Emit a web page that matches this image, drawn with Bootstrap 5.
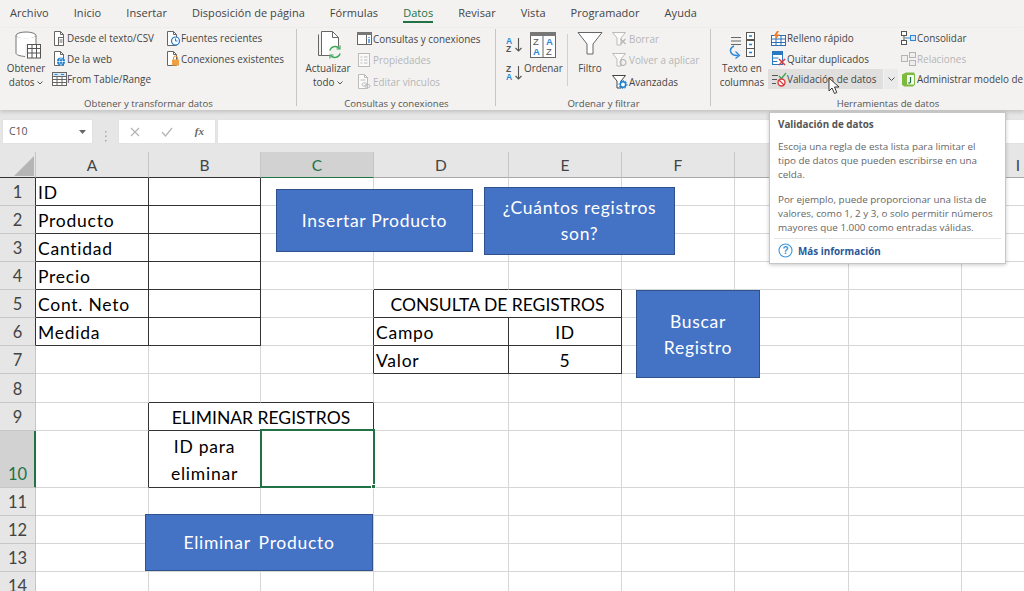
<!DOCTYPE html>
<html lang="es">
<head>
<meta charset="utf-8">
<title>Excel - Validación de datos</title>
<link href="https://cdn.jsdelivr.net/npm/bootstrap@5.3.0/dist/css/bootstrap.min.css" rel="stylesheet">
<style>
html,body{margin:0;height:591px;overflow:hidden;background:#fff}
.xl-app{width:1024px;height:591px;overflow:hidden;position:relative;font-family:"Open Sans","Liberation Sans",sans-serif;color:#444}
.xl-tabs{height:28px;background:#f3f2f1;padding-left:10px;gap:25px;font-size:11px;letter-spacing:.05px;line-height:26px;color:#444;white-space:nowrap}
.xl-tab{position:relative}
.xl-tab.on{color:#217346}
.xl-tab.on::after{content:"";position:absolute;left:0;right:0;top:21px;height:2px;background:#217346}
.xl-ribbon{height:82px;background:#f3f2f1;font-size:9.9px;white-space:nowrap;position:relative;z-index:2;box-shadow:0 2px 4px rgba(0,0,0,.16)}
.xl-grp{position:relative;height:82px;flex:none}
.xl-grp::after{content:"";position:absolute;right:0;top:1px;width:1px;height:77px;background:#c8c6c4}
.xl-g1{width:297px}.xl-g2{width:199px}.xl-g3{width:215px}.xl-g4{width:354px}
.xl-g4::after{display:none}
.xl-body{height:68px}
.xl-lbl{height:14px;line-height:15px;text-align:center;color:#555;font-size:9.6px}
.xl-big{flex:none;line-height:14px;text-align:center}
.xl-big svg{display:block;margin:3px auto 2px;height:28px}
.xl-big svg.ob{margin-left:10px}
.xl-big svg.ac{margin-left:12px}
.xl-big svg.inl{display:inline;margin:0;height:4px}
.xl-col{flex:none}
.xl-row{height:20.5px;line-height:20.5px}
.xl-row2{height:21.3px;line-height:22px}
.xl-slot{width:16px;flex:none;display:flex;align-items:center;justify-content:center}
.off{color:#b6b6b6}
.p1{margin-left:1px}.w50{width:50px}.w46{width:46px}.w38{width:38px}.w34{width:34px}
.c1a{width:114px}.c1b{width:120px}.c2a{width:140px;margin-left:2px}.c4a{width:116px;margin-left:3px}
.pl6{margin-left:6px}.pl4{margin-left:4px}.pl8{margin-left:8px}.pl9{margin-left:9px}
.s18{width:18px}.s17{width:17px;margin-left:2px}
.xl-sort{width:19px}
.xl-sort svg{display:block}
.so1{margin-top:9px}.so2{margin-top:12px}
.xl-vsep{width:1px;height:52px;margin:6px 5px 0 5px;background:#d2d0ce}
.xl-hot{background:#e1dfdd;height:20px;width:115px}
.xl-dcol{width:15px;padding-top:41px}
.xl-drop{width:14px;height:20px;background:#eaeaea}
.xl-fbar{height:42px;background:#e6e6e6;padding:10px 0 0 3px;gap:0}
.xl-box{background:#fff;height:23px;box-shadow:0 0 1px #cfcfcf}
.xl-name{width:89px;font-size:10.5px;color:#555;padding:0 6px}
.xl-grip{width:27px}
.xl-fx{width:96px;color:#a8a8a8;font-size:13px;padding:0 11px}
.xl-fx i{font-family:"Liberation Serif",serif;font-weight:700;color:#666;font-size:11px}
.xl-input{flex:1;margin-left:3px}
.xl-sheet{position:relative;height:439px;overflow:hidden;background:#fff}
.xl-sheet .xl-tb{width:1075px;table-layout:fixed;border-collapse:separate;border-spacing:0;margin:0;font-family:Lato,"Liberation Sans",sans-serif;font-size:17.5px;letter-spacing:.75px;color:#000}
.xl-sheet .xl-tb>*>*>*{padding:2px 2px 0;border-width:0 1px 1px 0;border-style:solid;border-color:#d6d6d6;height:28px;line-height:25px;background:#fff;box-shadow:none;vertical-align:bottom;overflow:visible;white-space:nowrap;color:#000}
.xl-sheet .xl-tb>*>*>.rn{background:#e6e6e6;border-color:#c6c6c6;text-align:center;color:#444;font-weight:400;padding:2px 0 0;font-size:16.5px;letter-spacing:0}
.xl-sheet .xl-tb>thead>tr>th{height:26px;background:#e6e6e6;border-color:#c6c6c6 #c6c6c6 #a8a8a8 #c6c6c6;text-align:center;color:#444;font-weight:400;font-size:15.5px;line-height:24px;padding:1px 0 0;vertical-align:middle;letter-spacing:0}
.xl-sheet .xl-tb>*>tr.r29>*{height:29px}
.xl-sheet .xl-tb>*>tr.r57>*{height:57px}
.xl-sheet .xl-tb>tbody>tr>.br{border-right-color:#333}
.xl-sheet .xl-tb>tbody>tr>.bb,.xl-sheet .xl-tb>thead>tr>.bb{border-bottom-color:#333}
.xl-sheet .xl-tb>tbody>tr>.ctr{text-align:center}
.xl-sheet .xl-tb>tbody>tr>.caps{letter-spacing:0}
.xl-sheet .xl-tb>tbody>tr>.wrap{white-space:normal;line-height:27px;padding:2px 20px 0;text-align:center}
.xl-sheet .xl-tb>thead>tr>.selc{background:#d2d2d2;border-bottom-color:#217346;color:#217346}
.xl-sheet .xl-tb>tbody>tr>.selr{background:#d2d2d2;border-right-color:#217346;color:#217346;box-shadow:inset -1px 0 0 #217346}
.xl-sel{position:absolute;left:260px;top:277px;width:115px;height:59px;border:2px solid #217346}
.xl-sel::after{content:"";position:absolute;right:-3px;bottom:-3px;width:5px;height:5px;background:#217346;border:1px solid #fff}
.xl-shape{position:absolute;background:#4472c4;border:1px solid #2f528f;color:#fff;font-family:Lato,"Liberation Sans",sans-serif;font-size:17.5px;letter-spacing:.7px;line-height:26px;text-align:center}
.sh1{left:276px;top:37px;width:197px;height:63px}
.sh2{left:484px;top:35px;width:191px;height:68px;padding:0 10px}
.sh3{left:636px;top:138px;width:124px;height:88px;padding:1px 30px 0}
.sh4{left:145px;top:362px;width:228px;height:57px;word-spacing:3px}
.xl-corner{position:absolute;left:14px;top:4px}
.xl-tip{position:absolute;z-index:5;left:769px;top:112px;width:237px;height:152px;background:#fff;border:1px solid #c8c6c4;box-shadow:0 1px 4px rgba(0,0,0,.22);font-size:9.85px;line-height:14px;color:#666;padding:4px 8px 0 8px;white-space:nowrap}
.xl-tip-h{font-weight:700;color:#555;line-height:14px;margin-bottom:8px}
.xl-tip-p{margin-bottom:11px}
.xl-tip-sep{height:1px;background:#e6e6e6;margin:4px -4px 4px -4px}
.xl-tip-more{color:#2b5797;font-weight:700;gap:5px}
.xl-cursor{position:absolute;z-index:6;left:828px;top:77px}
</style>
</head>
<body>
<div class="xl-app">
  <nav class="xl-tabs d-flex">
    <span class="xl-tab">Archivo</span><span class="xl-tab">Inicio</span><span class="xl-tab">Insertar</span><span class="xl-tab">Disposición de página</span><span class="xl-tab">Fórmulas</span><span class="xl-tab on">Datos</span><span class="xl-tab">Revisar</span><span class="xl-tab">Vista</span><span class="xl-tab">Programador</span><span class="xl-tab">Ayuda</span>
  </nav>

  <div class="xl-ribbon d-flex">
    <!-- Grupo 1 -->
    <section class="xl-grp xl-g1">
      <div class="xl-body d-flex">
        <div class="xl-big w50 p1">
          <svg class="ob" width="30" height="28" viewBox="0 0 30 28"><ellipse cx="15" cy="4.500" rx="10" ry="3.500" fill="#fff" stroke="#777"/><path d="M5 5v17c0 2 4 3 9 3.500V13h11V5c-2 3-18 3-20 0z" fill="#fff"/><path d="M5 4.500V22c0 2 4 3 9 3.500M25 4.500V13" fill="none" stroke="#777"/><rect x="16.500" y="13.500" width="13" height="13.500" fill="#fff" stroke="#555"/><path d="M16.500 17.500h13M16.500 22h13M21 13.500V27M25.500 13.500V27" stroke="#555"/></svg>
          Obtener<br>datos <svg class="inl" width="6" height="4" viewBox="0 0 6 4"><path d="M.5.5 3 3 5.500.5" fill="none" stroke="#555"/></svg>
        </div>
        <div class="xl-col c1a">
          <div class="xl-row d-flex"><span class="xl-slot"><svg width="14" height="15" viewBox="0 0 14 15"><path d="M2.500.500h6l3 3v11h-9z" fill="#fff" stroke="#666"/><path d="M8.500.500v3h3" fill="none" stroke="#666"/><rect x="6.500" y="6.500" width="5" height="8" fill="#fff" stroke="#666"/><path d="M7.500 9h3M7.500 11h3" stroke="#666"/></svg></span>Desde el texto/CSV</div>
          <div class="xl-row d-flex"><span class="xl-slot"><svg width="14" height="15" viewBox="0 0 14 15"><path d="M2.500.500h6l3 3v11h-9z" fill="#fff" stroke="#666"/><path d="M8.500.500v3h3" fill="none" stroke="#666"/><circle cx="9" cy="10.500" r="4" fill="#1a7fd0"/><path d="M5 10.500h8M9 6.500c-2 2.500-2 5.500 0 8M9 6.500c2 2.500 2 5.500 0 8" fill="none" stroke="#fff" stroke-width=".7"/></svg></span>De la web</div>
          <div class="xl-row d-flex"><span class="xl-slot"><svg width="15" height="14" viewBox="0 0 15 14"><rect x=".5" y=".5" width="14" height="13" fill="#fff" stroke="#666"/><rect x="1" y="1" width="13" height="3" fill="#d6e8f6"/><path d="M2.500 2.500h3M9 2.500h3" stroke="#2b88d8"/><path d="M.5 4.500h14M.5 7.500h14M.5 10.500h14M5 4.500v9M10 4.500v9" stroke="#666"/></svg></span>From Table/Range</div>
        </div>
        <div class="xl-col c1b">
          <div class="xl-row d-flex"><span class="xl-slot"><svg width="15" height="15" viewBox="0 0 15 15"><path d="M1.500.500h6l3 3v11h-9z" fill="#fff" stroke="#666"/><path d="M7.500.500v3h3" fill="none" stroke="#666"/><circle cx="9.500" cy="10" r="4" fill="#fff" stroke="#1a7fd0" stroke-width="1.200"/><path d="M9.500 7.500V10h2" fill="none" stroke="#1a7fd0"/></svg></span>Fuentes recientes</div>
          <div class="xl-row d-flex"><span class="xl-slot"><svg width="15" height="15" viewBox="0 0 15 15"><path d="M1.500.500h6l3 3v11h-9z" fill="#fff" stroke="#666"/><path d="M7.500.500v3h3" fill="none" stroke="#666"/><rect x="6" y="8.500" width="7" height="6" fill="#f0a040"/><path d="M7.500 8.500V7a2 2 0 0 1 4 0v1.500" fill="none" stroke="#e08a1e"/></svg></span>Conexiones existentes</div>
        </div>
      </div>
      <div class="xl-lbl">Obtener y transformar datos</div>
    </section>

    <!-- Grupo 2 -->
    <section class="xl-grp xl-g2">
      <div class="xl-body d-flex">
        <div class="xl-big w50 pl6">
          <svg class="ac" width="30" height="28" viewBox="0 0 30 28"><path d="M3.500 3.500v21h4" fill="none" stroke="#666"/><path d="M6.500.500h11l6 6v18h-17z" fill="#fff" stroke="#666"/><path d="M17.500.500v6h6" fill="none" stroke="#666"/><circle cx="20" cy="21" r="6.500" fill="#f3f2f1"/><path d="M14.800 19.500a5.500 5.500 0 0 1 9.500-2M25.200 22.500a5.500 5.500 0 0 1-9.500 2" fill="none" stroke="#3aa655" stroke-width="1.300"/><path d="M25 14.500v3.500h-3.500M15 27.500V24h3.500" fill="none" stroke="#3aa655" stroke-width="1.200"/></svg>
          Actualizar<br>todo <svg class="inl" width="6" height="4" viewBox="0 0 6 4"><path d="M.5.5 3 3 5.500.5" fill="none" stroke="#555"/></svg>
        </div>
        <div class="xl-col c2a">
          <div class="xl-row2 d-flex"><span class="xl-slot s18"><svg width="15" height="13" viewBox="0 0 15 13"><rect x=".5" y=".5" width="14" height="12" fill="#fff" stroke="#666"/><rect x="0" y="0" width="15" height="3" fill="#777"/><path d="M9.500 3v10" stroke="#666"/><path d="M12 5v1M12 7v4" stroke="#1a7fd0" stroke-width="1.300"/></svg></span>Consultas y conexiones</div>
          <div class="xl-row2 d-flex off"><span class="xl-slot s18"><svg width="12" height="14" viewBox="0 0 12 14"><rect x=".5" y=".5" width="11" height="13" fill="#fafafa" stroke="#bbb"/><path d="M2.500 4h2M6 4h3.500M2.500 7h2M6 7h3.500M2.500 10h2M6 10h3.500" stroke="#bbb"/></svg></span>Propiedades</div>
          <div class="xl-row2 d-flex off"><span class="xl-slot s18"><svg width="14" height="15" viewBox="0 0 14 15"><path d="M1.500.500h6l3 3v11h-9z" fill="#fafafa" stroke="#bbb"/><path d="M7.500.500v3h3M3.500 6h5" fill="none" stroke="#bbb"/><rect x="5" y="9" width="5" height="3" rx="1.500" fill="none" stroke="#bbb"/><rect x="8" y="10.500" width="5" height="3" rx="1.500" fill="none" stroke="#bbb"/></svg></span>Editar vínculos</div>
        </div>
      </div>
      <div class="xl-lbl">Consultas y conexiones</div>
    </section>

    <!-- Grupo 3 -->
    <section class="xl-grp xl-g3">
      <div class="xl-body d-flex">
        <div class="xl-col xl-sort pl9">
          <svg class="so1" width="19" height="16" viewBox="0 0 19 16"><text x="1" y="7" font-family="Liberation Sans" font-weight="700" font-size="8.500" fill="#2b88d8">A</text><text x="1" y="15" font-family="Liberation Sans" font-weight="700" font-size="8.500" fill="#555">Z</text><path d="M13.500 1v13M10.500 11l3 3 3-3" fill="none" stroke="#555" stroke-width="1.100"/></svg>
          <svg class="so2" width="19" height="16" viewBox="0 0 19 16"><text x="1" y="7" font-family="Liberation Sans" font-weight="700" font-size="8.500" fill="#555">Z</text><text x="1" y="15" font-family="Liberation Sans" font-weight="700" font-size="8.500" fill="#2b88d8">A</text><path d="M13.500 1v13M10.500 11l3 3 3-3" fill="none" stroke="#555" stroke-width="1.100"/></svg>
        </div>
        <div class="xl-big w38">
          <svg width="26" height="28" viewBox="0 1 26 28"><rect x=".5" y="2.500" width="25" height="25" fill="#fff" stroke="#666"/><rect x="0" y="2" width="26" height="4" fill="#777"/><path d="M13 6v21" stroke="#666"/><text x="3" y="15" font-family="Liberation Sans" font-size="9.500" fill="#555">Z</text><text x="3" y="25" font-family="Liberation Sans" font-weight="700" font-size="9.500" fill="#2b88d8">A</text><text x="16" y="15" font-family="Liberation Sans" font-weight="700" font-size="9.500" fill="#2b88d8">A</text><text x="16" y="25" font-family="Liberation Sans" font-size="9.500" fill="#555">Z</text></svg>
          Ordenar
        </div>
        <div class="xl-vsep"></div>
        <div class="xl-big w34">
          <svg width="26" height="28" viewBox="0 3 26 28"><path d="M1 4.500h24L16 16v10h-6V16z" fill="#fff" stroke="#666"/></svg>
          Filtro
        </div>
        <div class="xl-col pl4">
          <div class="xl-row2 d-flex off"><span class="xl-slot s18"><svg width="16" height="15" viewBox="0 0 16 15"><path d="M.5 1.500h13L9 7v7H5V7z" fill="#fafafa" stroke="#bbb"/><path d="M8.500 8l5 5M13.500 8l-5 5" stroke="#b4b4b4" stroke-width="1.200"/></svg></span>Borrar</div>
          <div class="xl-row2 d-flex off"><span class="xl-slot s18"><svg width="16" height="15" viewBox="0 0 16 15"><path d="M.5 1.500h13L9 7v7H5V7z" fill="#fafafa" stroke="#bbb"/><circle cx="11" cy="10.500" r="3" fill="none" stroke="#aaa"/></svg></span>Volver a aplicar</div>
          <div class="xl-row2 d-flex"><span class="xl-slot s18"><svg width="16" height="15" viewBox="0 0 16 15"><path d="M.5 1.500h13L9 7v7H5V7z" fill="#fff" stroke="#444"/><circle cx="11" cy="10.500" r="2.700" fill="#fff" stroke="#1a7fd0" stroke-width="1.500"/><circle cx="11" cy="10.500" r="4" fill="none" stroke="#1a7fd0" stroke-dasharray="1.500 1.500"/></svg></span>Avanzadas</div>
        </div>
      </div>
      <div class="xl-lbl">Ordenar y filtrar</div>
    </section>

    <!-- Grupo 4 -->
    <section class="xl-grp xl-g4">
      <div class="xl-body d-flex">
        <div class="xl-big w46 pl8">
          <svg width="28" height="28" viewBox="0 0 28 28"><path d="M3 6.500h10M3 10h10M3 13.500h10" stroke="#666" stroke-width="1.200"/><rect x="18.500" y="1.500" width="8" height="7" fill="#fff" stroke="#555"/><rect x="18.500" y="9.500" width="8" height="8" fill="#fff" stroke="#555"/><rect x="18.500" y="17.500" width="8" height="8" fill="#fff" stroke="#555"/><path d="M21 5h3M21 13.500h3M21 21.500h3" stroke="#1a7fd0" stroke-width="1.300"/><path d="M6 15c-6 3-4 10 4 9.500" fill="none" stroke="#2b88d8" stroke-width="1.500"/><path d="M7.500 20.500l4 4-4 3" fill="none" stroke="#2b88d8" stroke-width="1.300"/></svg>
          Texto en<br>columnas
        </div>
        <div class="xl-col c4a">
          <div class="xl-row d-flex"><span class="xl-slot s17"><svg width="15" height="15" viewBox="0 0 15 15"><rect x=".5" y="4.500" width="14" height="10" fill="#fff" stroke="#2b6fb5"/><path d="M.5 8h14M.5 11.500h14M5 4.500v10M10 4.500v10" stroke="#2b6fb5"/><path d="M6 0 2.500 5h3L4 9l5-5.500H6L8 0z" fill="#ed7d31"/></svg></span>Relleno rápido</div>
          <div class="xl-row d-flex"><span class="xl-slot s17"><svg width="15" height="15" viewBox="0 0 15 15"><rect x="1.500" y=".5" width="10" height="13" fill="#fff" stroke="#2b78c2"/><rect x="1" y="0" width="11" height="4" fill="#2b78c2"/><path d="M1.500 7h6M1.500 10.500h5" stroke="#2b78c2"/><path d="M8 8l6 6M14 8l-6 6" stroke="#d83b3b" stroke-width="1.500"/></svg></span>Quitar duplicados</div>
          <div class="xl-row d-flex xl-hot"><span class="xl-slot s17"><svg width="16" height="15" viewBox="0 0 16 15"><path d="M1 3.500h6M1 7.500h5M1 11.500h4" stroke="#555" stroke-width="1.200"/><path d="M8 4l2.500 2.500L15 1" fill="none" stroke="#3aa655" stroke-width="1.300"/><circle cx="10.500" cy="10.500" r="3.500" fill="#fff" stroke="#d83b3b" stroke-width="1.400"/><path d="M8 8l5 5" stroke="#d83b3b" stroke-width="1.300"/></svg></span>Validación de datos</div>
        </div>
        <div class="xl-col xl-dcol"><div class="xl-drop d-flex align-items-center justify-content-center"><svg width="7" height="4" viewBox="0 0 7 4"><path d="M.5.5 3.500 3.500 6.500.5" fill="none" stroke="#555"/></svg></div></div>
        <div class="xl-col">
          <div class="xl-row d-flex"><span class="xl-slot s18"><svg width="15" height="14" viewBox="0 0 15 14"><rect x=".5" y=".5" width="5" height="4" fill="#fff" stroke="#555"/><rect x=".5" y="9.500" width="5" height="4" fill="#fff" stroke="#555"/><path d="M3 4.500v5" stroke="#555"/><rect x="9.500" y="4.500" width="5" height="5" fill="#d6e8f6" stroke="#2b88d8"/><path d="M4 7h5" stroke="#2b88d8"/></svg></span>Consolidar</div>
          <div class="xl-row d-flex off"><span class="xl-slot s18"><svg width="15" height="14" viewBox="0 0 15 14"><rect x=".5" y="3.500" width="6" height="6" fill="#eee" stroke="#b4b4b4"/><rect x="8.500" y=".5" width="6" height="5" fill="#eee" stroke="#b4b4b4"/><rect x="8.500" y="8.500" width="6" height="5" fill="#eee" stroke="#b4b4b4"/></svg></span>Relaciones</div>
          <div class="xl-row d-flex"><span class="xl-slot s18"><svg width="15" height="15" viewBox="0 0 15 15"><path d="M1 2.500 5 .5h8l1 2v10l-2 2H3l-2-2z" fill="#7dba3e"/><rect x="6" y="3" width="7" height="9.500" fill="#fff" opacity=".92"/><path d="M9.500 5v5c0 1-1.500 1.500-2 .5" fill="none" stroke="#217346" stroke-width="1.200"/></svg></span>Administrar modelo de datos</div>
        </div>
      </div>
      <div class="xl-lbl">Herramientas de datos</div>
    </section>
  </div>

  <div class="xl-fbar d-flex">
    <div class="xl-box xl-name d-flex align-items-center justify-content-between"><span>C10</span><svg width="7" height="4" viewBox="0 0 7 4"><path d="M0 0h7L3.500 4z" fill="#666"/></svg></div>
    <div class="xl-grip d-flex align-items-center justify-content-center"><svg width="3" height="13" viewBox="0 0 3 13"><path d="M1 1h1.500v1.500H1zM1 5.500h1.500V7H1zM1 10h1.500v1.500H1z" fill="#a8a8a8"/></svg></div>
    <div class="xl-box xl-fx d-flex align-items-center justify-content-between">
      <svg width="10" height="10" viewBox="0 0 10 10"><path d="M1 1l8 8M9 1l-8 8" stroke="#b4b4b4" stroke-width="1.200"/></svg>
      <svg width="12" height="10" viewBox="0 0 12 10"><path d="M1 5l3.500 4L11 1" fill="none" stroke="#b4b4b4" stroke-width="1.200"/></svg>
      <i>fx</i>
    </div>
    <div class="xl-box xl-input"></div>
  </div>

  <div class="xl-sheet">
    <table class="table xl-tb">
      <colgroup><col style="width:36px"><col style="width:113px"><col style="width:112px"><col style="width:113px"><col style="width:135px"><col style="width:113px"><col style="width:113px"><col style="width:114px"><col style="width:113px"><col style="width:113px"></colgroup>
      <thead>
        <tr><th class="bb"></th><th class="bb">A</th><th class="bb">B</th><th class="selc">C</th><th>D</th><th>E</th><th>F</th><th></th><th></th><th>I</th></tr>
      </thead>
      <tbody>
        <tr><th class="rn br">1</th><td class="br bb">ID</td><td class="br bb"></td><td></td><td></td><td></td><td></td><td></td><td></td><td></td></tr>
        <tr><th class="rn br">2</th><td class="br bb">Producto</td><td class="br bb"></td><td></td><td></td><td></td><td></td><td></td><td></td><td></td></tr>
        <tr><th class="rn br">3</th><td class="br bb">Cantidad</td><td class="br bb"></td><td></td><td></td><td></td><td></td><td></td><td></td><td></td></tr>
        <tr><th class="rn br">4</th><td class="br bb">Precio</td><td class="br bb"></td><td></td><td class="bb"></td><td class="bb"></td><td></td><td></td><td></td><td></td></tr>
        <tr><th class="rn br">5</th><td class="br bb">Cont. Neto</td><td class="br bb"></td><td class="br"></td><td class="br bb ctr caps" colspan="2">CONSULTA DE REGISTROS</td><td></td><td></td><td></td><td></td></tr>
        <tr><th class="rn br">6</th><td class="br bb">Medida</td><td class="br bb"></td><td class="br"></td><td class="br bb">Campo</td><td class="br bb ctr">ID</td><td></td><td></td><td></td><td></td></tr>
        <tr><th class="rn">7</th><td></td><td></td><td class="br"></td><td class="br bb">Valor</td><td class="br bb ctr">5</td><td></td><td></td><td></td><td></td></tr>
        <tr class="r29"><th class="rn">8</th><td></td><td class="bb"></td><td class="bb"></td><td></td><td></td><td></td><td></td><td></td><td></td></tr>
        <tr><th class="rn">9</th><td class="br"></td><td class="br bb ctr caps" colspan="2">ELIMINAR REGISTROS</td><td></td><td></td><td></td><td></td><td></td><td></td></tr>
        <tr class="r57"><th class="rn selr">10</th><td class="br"></td><td class="br bb wrap">ID para eliminar</td><td class="bb"></td><td></td><td></td><td></td><td></td><td></td><td></td></tr>
        <tr><th class="rn">11</th><td></td><td></td><td></td><td></td><td></td><td></td><td></td><td></td><td></td></tr>
        <tr><th class="rn">12</th><td></td><td></td><td></td><td></td><td></td><td></td><td></td><td></td><td></td></tr>
        <tr><th class="rn">13</th><td></td><td></td><td></td><td></td><td></td><td></td><td></td><td></td><td></td></tr>
        <tr><th class="rn">14</th><td></td><td></td><td></td><td></td><td></td><td></td><td></td><td></td><td></td></tr>
      </tbody>
    </table>
    <svg class="xl-corner" width="20" height="20" viewBox="0 0 20 20"><path d="M20 0v20H0z" fill="#b5b5b5"/></svg>
    <div class="xl-sel"></div>
    <div class="xl-shape sh1 d-flex align-items-center justify-content-center">Insertar Producto</div>
    <div class="xl-shape sh2 d-flex align-items-center justify-content-center">¿Cuántos registros son?</div>
    <div class="xl-shape sh3 d-flex align-items-center justify-content-center">Buscar Registro</div>
    <div class="xl-shape sh4 d-flex align-items-center justify-content-center">Eliminar Producto</div>
  </div>

  <div class="xl-tip">
    <div class="xl-tip-h">Validación de datos</div>
    <div class="xl-tip-p">Escoja una regla de esta lista para limitar el<br>tipo de datos que pueden escribirse en una<br>celda.</div>
    <div>Por ejemplo, puede proporcionar una lista de<br>valores, como 1, 2 y 3, o solo permitir números<br>mayores que 1.000 como entradas válidas.</div>
    <div class="xl-tip-sep"></div>
    <div class="xl-tip-more d-flex align-items-center"><svg width="15" height="15" viewBox="0 0 15 15"><circle cx="7.500" cy="7.500" r="6.500" fill="#fff" stroke="#3a96dd" stroke-width="1.100"/><text x="7.500" y="11" text-anchor="middle" font-family="Liberation Sans" font-size="10" fill="#3a96dd">?</text></svg><span>Más información</span></div>
  </div>

  <svg class="xl-cursor" width="13" height="18" viewBox="0 0 13 18"><path d="M1 1v13l3-3 2.500 5.500 2.300-1L6.500 10H11z" fill="#fff" stroke="#222" stroke-width=".9"/></svg>
</div>
<script src="https://cdn.jsdelivr.net/npm/bootstrap@5.3.0/dist/js/bootstrap.bundle.min.js"></script>
</body>
</html>
